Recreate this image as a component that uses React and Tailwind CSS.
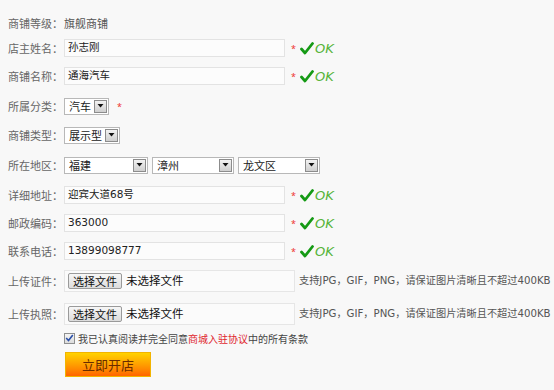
import React from 'react';

const cjk = { fontFamily: '"Noto Sans CJK SC", sans-serif' };
const mixed = { fontFamily: '"DejaVu Sans", "Noto Sans CJK SC", sans-serif' };

const Label = ({ children }) => (
  <span className="w-[56px] shrink-0 text-[11px] text-[#666]" style={cjk}>
    {children}
  </span>
);

const Required = () => <span className="ml-[6px] text-[9px] leading-none text-[#e33]">*</span>;

const Ok = () => (
  <span className="ml-[4px] flex items-center">
    <svg width="14" height="13" viewBox="0 0 14 13">
      <path d="M1.5 7 L5 11 L12.5 1.5" fill="none" stroke="#159a15" strokeWidth="2.8" strokeLinejoin="round" strokeLinecap="round" />
    </svg>
    <span className="ml-[1px] text-[13px] italic leading-none text-[#55b43a]" style={{ fontFamily: '"DejaVu Sans", sans-serif' }}>
      OK
    </span>
  </span>
);

const TextInput = ({ value }) => (
  <div
    className="flex h-[18px] w-[221px] items-center border border-[#e3e3e3] bg-[#fcfcfc] px-[3px] text-[10.5px] text-[#222]"
    style={mixed}
  >
    {value}
  </div>
);

const Arrow = () => (
  <span className="ml-auto mr-px flex h-[13px] w-[13px] items-center justify-center border border-[#8c8c8c] bg-gradient-to-b from-[#f2f2f2] to-[#cfcfcf]">
    <svg width="7" height="4" viewBox="0 0 7 4">
      <path d="M0.5 0 L6.5 0 L3.5 3.5 Z" fill="#111" />
    </svg>
  </span>
);

const Select = ({ value, w }) => (
  <div className={`flex h-[17px] items-center border border-[#b8b8b8] bg-white pl-[4px] text-[11px] text-[#222] ${w}`} style={cjk}>
    <span>{value}</span>
    <Arrow />
  </div>
);

const Upload = () => (
  <div className="flex h-[22px] w-[231px] items-center border border-[#e6e6e6] bg-[#fbfbfb] pl-[3px]">
    <span
      className="flex h-[16px] items-center rounded-[2px] border border-[#9a9a9a] bg-gradient-to-b from-[#f7f7f7] to-[#dcdcdc] px-[4px] text-[11px] text-[#111]"
      style={cjk}
    >
      选择文件
    </span>
    <span className="ml-[4px] text-[11.5px] text-[#111]" style={cjk}>
      未选择文件
    </span>
  </div>
);

const Tip = () => (
  <span className="ml-[4px] whitespace-nowrap text-[10.2px] text-[#555]" style={mixed}>
    支持JPG，GIF，PNG，请保证图片清晰且不超过400KB
  </span>
);

const Row = ({ className, children }) => (
  <div className={`flex h-[18px] items-center ${className}`}>{children}</div>
);

export default function App() {
  return (
    <div className="h-[390px] w-[554px] overflow-hidden bg-[#f8f8f8] pl-[8px] pt-[14px]">
      <Row>
        <Label>商铺等级：</Label>
        <span className="text-[11px] text-[#555]" style={cjk}>旗舰商铺</span>
      </Row>
      <Row className="mt-[7px]">
        <Label>店主姓名：</Label>
        <TextInput value="孙志刚" />
        <Required />
        <Ok />
      </Row>
      <Row className="mt-[10px]">
        <Label>商铺名称：</Label>
        <TextInput value="通海汽车" />
        <Required />
        <Ok />
      </Row>
      <Row className="mt-[12px]">
        <Label>所属分类：</Label>
        <Select value="汽车" w="w-[45px]" />
        <span className="ml-[8px] text-[9px] leading-none text-[#e33]">*</span>
      </Row>
      <Row className="mt-[11px]">
        <Label>商铺类型：</Label>
        <Select value="展示型" w="w-[56px]" />
      </Row>
      <Row className="mt-[12px]">
        <Label>所在地区：</Label>
        <div className="flex gap-[4px]">
          <Select value="福建" w="w-[84px]" />
          <Select value="漳州" w="w-[82px]" />
          <Select value="龙文区" w="w-[82px]" />
        </div>
      </Row>
      <Row className="mt-[12px]">
        <Label>详细地址：</Label>
        <TextInput value="迎宾大道68号" />
        <Required />
        <Ok />
      </Row>
      <Row className="mt-[10px]">
        <Label>邮政编码：</Label>
        <TextInput value="363000" />
        <Required />
        <Ok />
      </Row>
      <Row className="mt-[10px]">
        <Label>联系电话：</Label>
        <TextInput value="13899098777" />
        <Required />
        <Ok />
      </Row>
      <Row className="mt-[10px] h-[22px]">
        <Label>上传证件：</Label>
        <Upload />
        <Tip />
      </Row>
      <Row className="mt-[11px] h-[22px]">
        <Label>上传执照：</Label>
        <Upload />
        <Tip />
      </Row>
      <div className="mt-[6px] flex h-[14px] items-center pl-[56px]">
        <span className="flex h-[11px] w-[11px] items-center justify-center border border-[#8e8f8f] bg-gradient-to-b from-[#f4f4f4] to-[#dcdcdc]">
          <svg width="9" height="8" viewBox="0 0 9 8">
            <path d="M1.2 4 L3.5 6.5 L7.8 1" fill="none" stroke="#2a4fa8" strokeWidth="1.6" />
          </svg>
        </span>
        <span className="ml-[3px] text-[10px] text-[#444]" style={cjk}>
          我已认真阅读并完全同意<span className="text-[#e0252d]">商城入驻协议</span>中的所有条款
        </span>
      </div>
      <div className="mt-[7px] pl-[57px]">
        <button
          className="flex h-[25px] w-[86px] items-center justify-center border border-[#f2b400] bg-gradient-to-b from-[#ffd200] to-[#ff6400] text-[13px] text-[#6a2c00]"
          style={cjk}
        >
          立即开店
        </button>
      </div>
    </div>
  );
}
